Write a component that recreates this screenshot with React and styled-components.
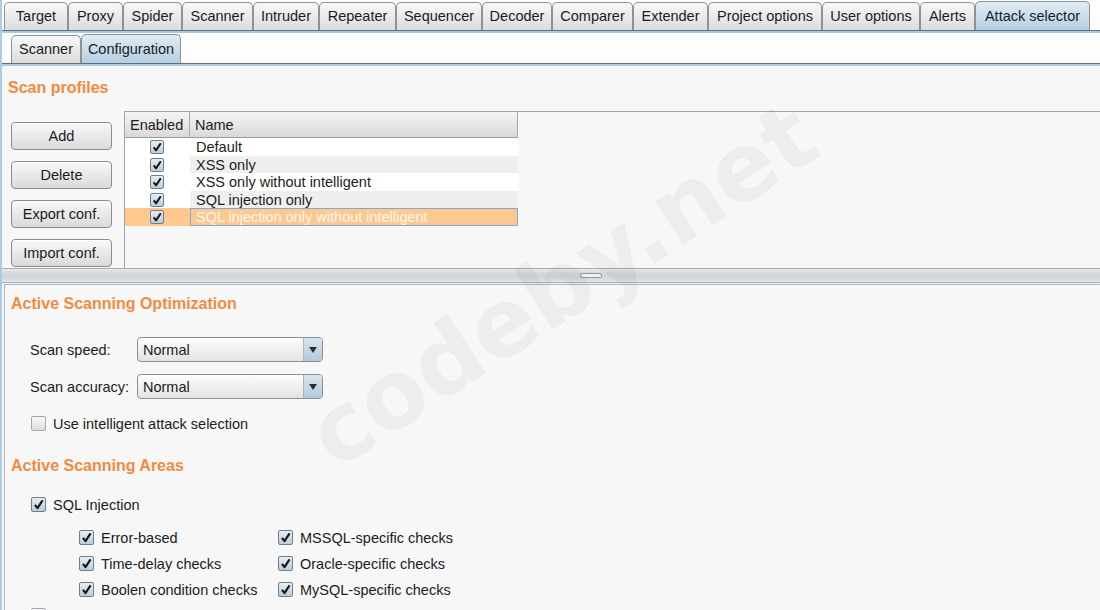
import React from 'react'
import styled, { createGlobalStyle } from 'styled-components'

const mainTabs = [
  ['Target', 64], ['Proxy', 55], ['Spider', 59], ['Scanner', 71], ['Intruder', 66],
  ['Repeater', 77], ['Sequencer', 86], ['Decoder', 70], ['Comparer', 81], ['Extender', 75],
  ['Project options', 114], ['User options', 98], ['Alerts', 55], ['Attack selector', 115],
]

const profiles = [
  'Default',
  'XSS only',
  'XSS only without intelligent',
  'SQL injection only',
  'SQL injection only without intelligent',
]

const sqlChecks = [
  'Error-based', 'MSSQL-specific checks',
  'Time-delay checks', 'Oracle-specific checks',
  'Boolen condition checks', 'MySQL-specific checks',
]

const Check = ({ checked = true, small }) => (
  <CheckBox $small={small} $checked={checked}>
    {checked && (
      <svg viewBox="0 0 14 14">
        <path d="M3.2 7.4 L5.9 10.9 L11.4 2.6" />
      </svg>
    )}
  </CheckBox>
)

const App = () => {
  return <>
    <GlobalStyle />
    <Window>
      <TabStrip $pad={2}>
        {mainTabs.map(([name, w]) => (
          <Tab key={name} $w={w} $active={name === 'Attack selector'}>{name}</Tab>
        ))}
      </TabStrip>
      <Rule />
      <TabStrip $pad={9}>
        <Tab $w={70}>Scanner</Tab>
        <Tab $w={100} $active>Configuration</Tab>
      </TabStrip>
      <Rule />

      <ProfilesPanel>
        <SectionTitle>Scan profiles</SectionTitle>
        <ProfilesBody>
          <ButtonColumn>
            <Button>Add</Button>
            <Button>Delete</Button>
            <Button>Export conf.</Button>
            <Button>Import conf.</Button>
          </ButtonColumn>
          <TablePanel>
            <Table>
              <HeaderRow>
                <HeaderCell>Enabled</HeaderCell>
                <HeaderCell>Name</HeaderCell>
              </HeaderRow>
              {profiles.map((p, i) => (
                <Row key={p} $selected={i === profiles.length - 1}>
                  <EnabledCell><Check small /></EnabledCell>
                  <NameCell $alt={i % 2 === 1} $selected={i === profiles.length - 1}>{p}</NameCell>
                </Row>
              ))}
            </Table>
          </TablePanel>
        </ProfilesBody>
      </ProfilesPanel>

      <Splitter><Grip /></Splitter>

      <OptionsPanel>
        <SectionTitle>Active Scanning Optimization</SectionTitle>
        <FieldRow $top={25}>
          <FieldLabel>Scan speed:</FieldLabel>
          <Select>
            <span>Normal</span>
            <SelectArrow><svg viewBox="0 0 8 6"><path d="M0 0 H8 L4 6 Z" /></svg></SelectArrow>
          </Select>
        </FieldRow>
        <FieldRow $top={12}>
          <FieldLabel>Scan accuracy:</FieldLabel>
          <Select>
            <span>Normal</span>
            <SelectArrow><svg viewBox="0 0 8 6"><path d="M0 0 H8 L4 6 Z" /></svg></SelectArrow>
          </Select>
        </FieldRow>
        <CheckRow $top={16} $indent={20}>
          <Check checked={false} />
          <span>Use intelligent attack selection</span>
        </CheckRow>

        <SectionTitle $top={25}>Active Scanning Areas</SectionTitle>
        <CheckRow $top={22} $indent={20}>
          <Check />
          <span>SQL Injection</span>
        </CheckRow>
        <SubGrid>
          {sqlChecks.map(c => (
            <CheckRow key={c}>
              <Check />
              <span>{c}</span>
            </CheckRow>
          ))}
        </SubGrid>
        <CheckRow $top={9} $indent={20}>
          <Check checked={false} />
        </CheckRow>
      </OptionsPanel>

      <Watermark>codeby.net</Watermark>
    </Window>
  </>
}

const GlobalStyle = createGlobalStyle`
  html, body {
    margin: 0;
    padding: 0;
  }
  body {
    font-family: "Liberation Sans", Arial, sans-serif;
    font-size: 14.5px;
    color: #1c1c1c;
    background: #f7f7f7;
  }
`

const Window = styled.div`
  position: relative;
  width: 1100px;
  height: 610px;
  overflow: hidden;
  box-sizing: border-box;
  border-left: 2px solid #a9cde6;
  background: #f7f7f7;
  display: flex;
  flex-direction: column;
`

const TabStrip = styled.div`
  display: flex;
  align-items: flex-end;
  height: 31px;
  box-sizing: border-box;
  padding-left: ${p => p.$pad}px;
  background: #fdfdfd;
  border-bottom: 1px solid #5f6f7b;
  flex: none;
`

const Rule = styled.div`
  height: 2px;
  background: #a8cbe4;
  flex: none;
`

const Tab = styled.div`
  width: ${p => p.$w}px;
  height: ${p => (p.$active ? 29 : 28)}px;
  box-sizing: border-box;
  border: 1px solid #8d9296;
  border-bottom: none;
  border-radius: 5px 5px 0 0;
  background: ${p => p.$active
    ? 'linear-gradient(#e2ecf3, #b3cfe3)'
    : 'linear-gradient(#f8f8f8, #dcdcdc)'};
  display: flex;
  align-items: center;
  justify-content: center;
  padding-bottom: 1px;
  white-space: nowrap;
  color: #1c1c1c;
`

const ProfilesPanel = styled.section`
  height: 202px;
  box-sizing: border-box;
  padding: 13px 0 0 6px;
  display: flex;
  flex-direction: column;
  flex: none;
`

const SectionTitle = styled.h2`
  margin: ${p => p.$top || 0}px 0 0;
  font-size: 16px;
  line-height: 17px;
  font-weight: bold;
  color: #f28b40;
`

const ProfilesBody = styled.div`
  flex: 1;
  display: flex;
  gap: 12px;
  margin-top: 15px;
  padding-left: 3px;
`

const ButtonColumn = styled.div`
  width: 101px;
  padding-top: 11px;
  display: flex;
  flex-direction: column;
  gap: 11px;
`

const Button = styled.button`
  height: 28px;
  border: 1px solid #8a8d90;
  border-radius: 4px;
  background: linear-gradient(#f8f8f8, #dadada);
  box-shadow: inset 0 1px 0 #fff;
  font-family: "Liberation Sans", Arial, sans-serif;
  font-size: 14.5px;
  color: #1c1c1c;
  padding: 0;
`

const TablePanel = styled.div`
  flex: 1;
  border-top: 1px solid #a2a2a2;
  border-left: 1px solid #a2a2a2;
  background: #f7f7f7;
`

const Table = styled.div`
  width: 393px;
`

const HeaderRow = styled.div`
  display: grid;
  grid-template-columns: 65px 1fr;
  height: 26px;
  box-sizing: border-box;
  border-bottom: 1px solid #9c9c9c;
  background: linear-gradient(#f5f5f5, #d9d9d9);
`

const HeaderCell = styled.div`
  display: flex;
  align-items: center;
  padding-left: 5px;
  border-right: 1px solid #a9a9a9;
`

const Row = styled.div`
  display: grid;
  grid-template-columns: 65px 1fr;
  height: 17.5px;
  background: ${p => (p.$selected ? '#ffc88f' : '#fff')};
`

const EnabledCell = styled.div`
  display: flex;
  align-items: center;
  justify-content: center;
  padding-right: 2px;
`

const NameCell = styled.div`
  display: flex;
  align-items: center;
  padding-left: 5px;
  box-sizing: border-box;
  background: ${p => (p.$selected ? 'transparent' : p.$alt ? '#efefef' : '#fff')};
  border: 1px solid ${p => (p.$selected ? '#7fabd0' : 'transparent')};
  color: ${p => (p.$selected ? '#fff7ee' : '#1c1c1c')};
  white-space: nowrap;
`

const CheckBox = styled.span`
  width: ${p => (p.$small ? 14 : 15)}px;
  height: ${p => (p.$small ? 14 : 15)}px;
  box-sizing: border-box;
  flex: none;
  display: inline-flex;
  border: 1px solid ${p => (p.$checked ? '#6d7e8c' : '#a3a7aa')};
  border-radius: 2px;
  background: ${p => (p.$checked
    ? 'linear-gradient(#e7eef4, #b9cddc)'
    : 'linear-gradient(#f9f9f9, #dcdcdc)')};
  svg {
    width: 100%;
    height: 100%;
    fill: none;
    stroke: #141414;
    stroke-width: 2.3;
    stroke-linejoin: round;
  }
`

const Splitter = styled.div`
  height: 15px;
  box-sizing: border-box;
  flex: none;
  border-top: 1px solid #a7acb0;
  border-bottom: 1px solid #a7acb0;
  background: linear-gradient(#e9ecee, #d3d8dc 30%, #d3d8dc 70%, #e4e7ea);
  display: flex;
  align-items: center;
  padding-left: 578px;
`

const Grip = styled.div`
  width: 20px;
  height: 3px;
  border: 1px solid #8f969c;
  border-radius: 2px;
  background: #eef0f2;
`

const OptionsPanel = styled.section`
  flex: 1;
  margin: 1px 0 0 2px;
  border-top: 1px solid #b1b6ba;
  border-left: 1px solid #b1b6ba;
  padding: 10px 0 0 6px;
  background: #f7f7f7;
`

const FieldRow = styled.div`
  display: flex;
  align-items: center;
  margin-top: ${p => p.$top}px;
  padding-left: 19px;
  height: 25px;
`

const FieldLabel = styled.span`
  width: 107px;
`

const Select = styled.div`
  width: 186px;
  height: 25px;
  box-sizing: border-box;
  border: 1px solid #8b8f93;
  border-radius: 4px;
  background: linear-gradient(#fdfdfd, #e3e3e3);
  display: flex;
  align-items: center;
  overflow: hidden;
  span {
    flex: 1;
    padding-left: 5px;
  }
`

const SelectArrow = styled.div`
  width: 18px;
  height: 100%;
  border-left: 1px solid #a6b6c2;
  background: linear-gradient(#dbe6ee, #b3c9d9);
  display: flex;
  align-items: center;
  justify-content: center;
  svg {
    width: 8px;
    height: 6px;
    fill: #2a2e33;
  }
`

const CheckRow = styled.label`
  display: flex;
  align-items: center;
  gap: 7px;
  height: 17px;
  margin-top: ${p => p.$top || 0}px;
  padding-left: ${p => p.$indent || 0}px;
  white-space: nowrap;
`

const SubGrid = styled.div`
  display: grid;
  grid-template-columns: 199px 199px;
  row-gap: 9px;
  margin-top: 16px;
  padding-left: 68px;
`

const Watermark = styled.div`
  position: absolute;
  left: 560px;
  top: 285px;
  transform: translate(-50%, -50%) rotate(-33deg);
  font-family: "DejaVu Sans", "Liberation Sans", sans-serif;
  font-weight: bold;
  font-size: 94px;
  color: rgba(0, 0, 0, 0.04);
  pointer-events: none;
  white-space: nowrap;
`

export default App
